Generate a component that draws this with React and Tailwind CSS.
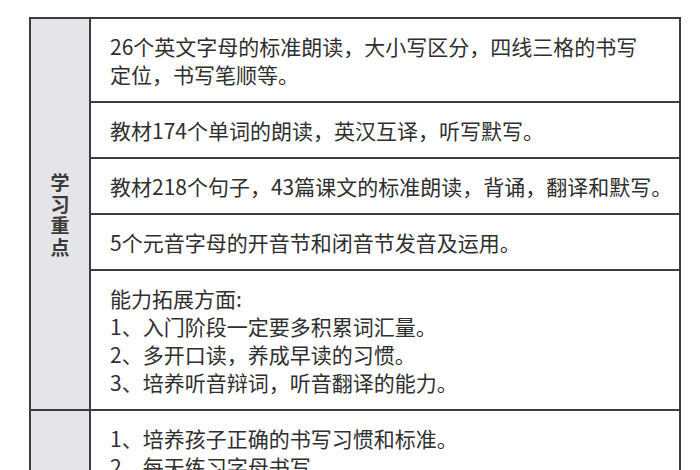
import React from 'react';

const cell = 'border-2 border-[#3d3d3d] py-[13px] pl-[19px] pr-1 whitespace-nowrap';

const groupOne = [
	['26个英文字母的标准朗读，大小写区分，四线三格的书写', '定位，书写笔顺等。'],
	['教材174个单词的朗读，英汉互译，听写默写。'],
	['教材218个句子，43篇课文的标准朗读，背诵，翻译和默写。'],
	['5个元音字母的开音节和闭音节发音及运用。'],
	['能力拓展方面:', '1、入门阶段一定要多积累词汇量。', '2、多开口读，养成早读的习惯。', '3、培养听音辩词，听音翻译的能力。'],
];

const groupTwo = [
	['1、培养孩子正确的书写习惯和标准。', '2、每天练习字母书写。', '3、规范书写单词和句子。'],
	['元音字母在单词中的发音规律。'],
	['能够听懂课堂用语并做出回应。'],
];

const Label = ({ text }) => (
	<div className="mx-auto w-[20px] text-[19px] font-bold leading-[21.5px] text-[#3a3a3a]">{text}</div>
);

const Lines = ({ lines }) =>
	lines.map((line, i) => (
		<React.Fragment key={i}>
			{i > 0 && <br />}
			{line}
		</React.Fragment>
	));

const Group = ({ label, rows, keyPrefix }) =>
	rows.map((lines, i) => (
		<tr key={keyPrefix + i}>
			{i === 0 && (
				<td
					rowSpan={rows.length}
					className="w-[60px] border-2 border-[#3d3d3d] bg-[#e5e4e9] text-center align-middle"
				>
					<Label text={label} />
				</td>
			)}
			<td className={cell}>
				<Lines lines={lines} />
			</td>
		</tr>
	));

export default function App() {
	return (
		<div
			className="min-h-screen bg-white pt-[17px] pl-[29px]"
			style={{ fontFamily: '"Noto Sans CJK SC", "Noto Sans", sans-serif' }}
		>
			<table className="w-[652px] border-collapse text-[21px] leading-[28px] text-[#2f2f2f]">
				<tbody>
					<Group label="学习重点" rows={groupOne} keyPrefix="a" />
					<Group label="学习难点" rows={groupTwo} keyPrefix="b" />
				</tbody>
			</table>
		</div>
	);
}
